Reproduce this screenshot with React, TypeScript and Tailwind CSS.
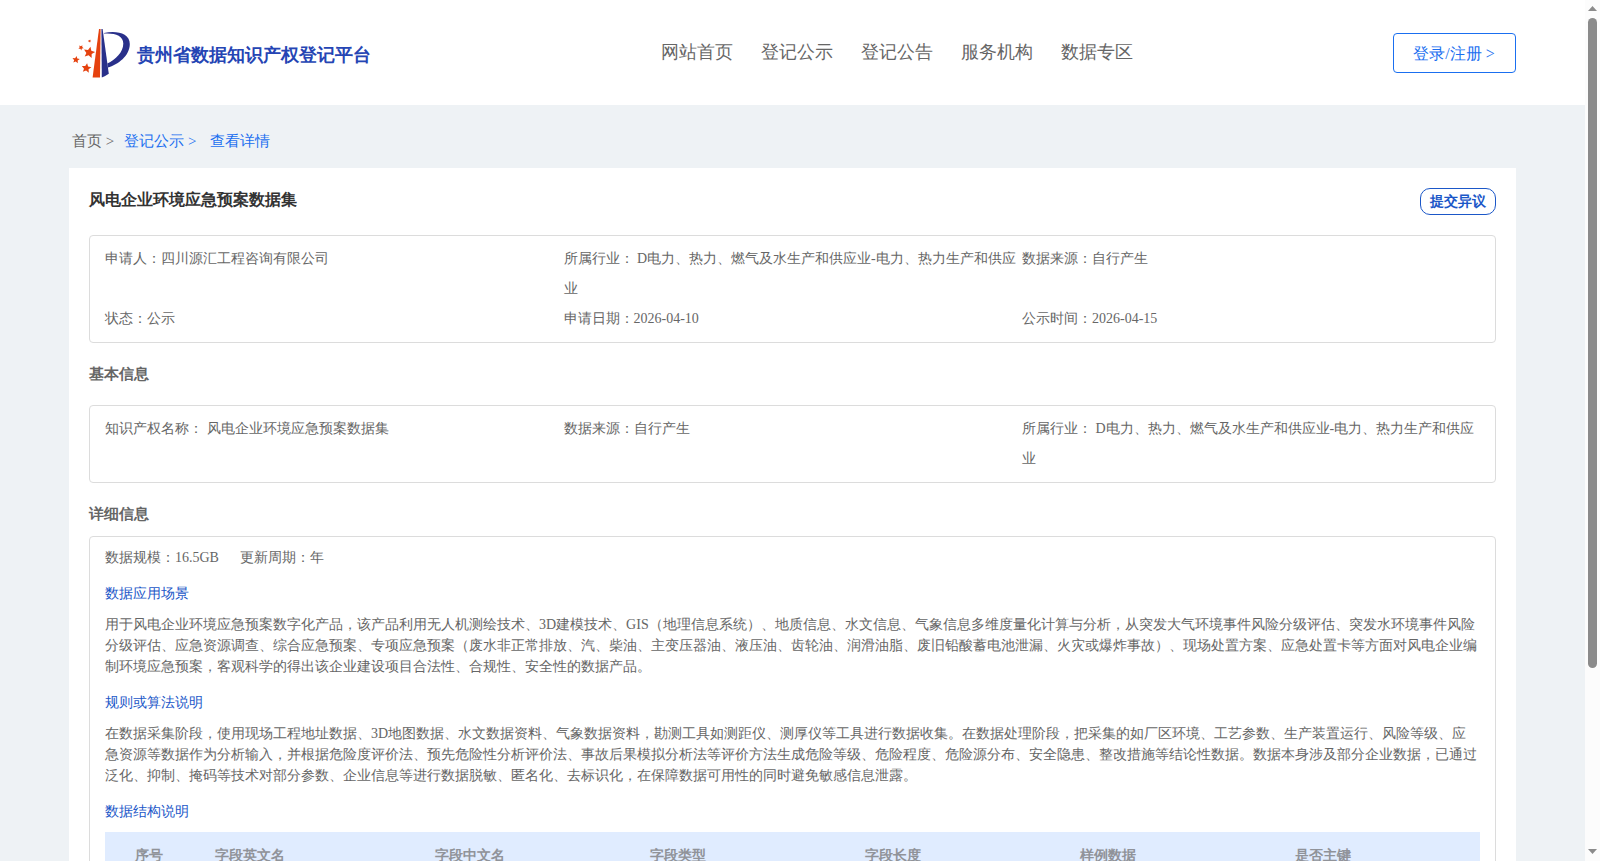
import clsx from "clsx";

const navItems = ["网站首页", "登记公示", "登记公告", "服务机构", "数据专区"];

const industry = "D电力、热力、燃气及水生产和供应业-电力、热力生产和供应业";

const columns = [
  { label: "序号", className: "w-[100px] pl-[30px]" },
  { label: "字段英文名", className: "w-[220px] pl-2.5" },
  { label: "字段中文名", className: "w-[215px] pl-2.5" },
  { label: "字段类型", className: "w-[215px] pl-2.5" },
  { label: "字段长度", className: "w-[215px] pl-2.5" },
  { label: "样例数据", className: "w-[215px] pl-2.5" },
  { label: "是否主键", className: "w-[195px] pl-2.5" },
];

function Star({ x, y, size, turn = 0 }: { x: number; y: number; size: number; turn?: number }) {
  return (
    <path
      transform={`translate(${x} ${y}) rotate(${turn}) scale(${size})`}
      d="M0 -1 L0.28 -0.38 L0.95 -0.31 L0.45 0.15 L0.59 0.81 L0 0.47 L-0.59 0.81 L-0.45 0.15 L-0.95 -0.31 L-0.28 -0.38 Z"
    />
  );
}

function Logo() {
  return (
    <svg width="60" height="52" viewBox="0 0 60 52" className="block">
      <path d="M27 1 L28.6 1 L28 49.4 L20.6 49.4 Z" fill="#e5420f" />
      <path d="M29.4 1 L30.6 1 L36.8 45.8 Q33.5 48.2 29.8 49.4 Z" fill="#29308a" />
      <path
        d="M32 5 C44 2.2 57.8 5 57.8 16 C57.8 28 46 36.5 35.9 39.6 L35.3 35.4 C43.5 32 51.3 24 51.3 15.5 C51.3 7.5 42.5 4.8 32 5.6 Z"
        fill="#29308a"
      />
      <g fill="#e5420f">
        <Star x={17.2} y={24.6} size={6} turn={12} />
        <Star x={14.4} y={40.2} size={5.1} turn={8} />
        <Star x={4} y={31.8} size={3.9} turn={8} />
        <Star x={9} y={19.6} size={2.8} turn={30} />
        <Star x={17.6} y={13} size={1.7} turn={20} />
      </g>
    </svg>
  );
}

function Header() {
  return (
    <header className="flex h-[105px] shrink-0 items-start bg-white pr-[69px] pl-[72px]">
      <div className="flex w-[588.5px] pt-7">
        <Logo />
        <h1 className="pt-3.5 pl-[5px] text-[18px] leading-[27px] font-bold text-[#2545b4]">
          贵州省数据知识产权登记平台
        </h1>
      </div>
      <nav className="flex gap-7 pt-[39px] text-[18px] leading-[27px] text-[#666]">
        {navItems.map((item) => (
          <a key={item}>{item}</a>
        ))}
      </nav>
      <button className="mt-[33px] ml-auto h-10 w-[123px] rounded-[4px] border border-[#1a6ff0] pt-0.5 pr-px text-[16px] text-[#1a6ff0]">
        登录/注册 &gt;
      </button>
    </header>
  );
}

function Breadcrumb() {
  return (
    <div className="flex h-[63px] pt-[25px] pl-[3px] text-[15px] leading-[22px] text-[#1a6ff0]">
      <span className="text-[#666]">首页 &gt;</span>
      <span className="ml-2.5">登记公示 &gt;</span>
      <span className="ml-[13.5px]">查看详情</span>
    </div>
  );
}

function InfoBox({ items, className }: { items: string[]; className?: string }) {
  return (
    <div
      className={clsx(
        "grid grid-cols-3 rounded-[4px] border border-[#dcdcdc] py-2 pr-[14.5px] pl-[15px] leading-[30px]",
        className
      )}
    >
      {items.map((item) => (
        <div key={item}>{item}</div>
      ))}
    </div>
  );
}

function DetailBlock({ title, children }: { title: string; children: string }) {
  return (
    <section className="mb-[15px]">
      <h3 className="mb-2.5 leading-[21px] text-[#1b57c8]">{title}</h3>
      <p className="leading-[21px]">{children}</p>
    </section>
  );
}

function Scrollbar() {
  return (
    <div className="flex h-full w-[15px] shrink-0 flex-col items-center bg-[#fcfcfc]">
      <svg width="15" height="18" viewBox="0 0 15 18">
        <path d="M3 11 L7.5 6 L12 11 Z" fill="#8b8b8b" />
      </svg>
      <div className="h-[650px] w-[9px] rounded-full bg-[#8b8b8b]" />
      <svg width="15" height="18" viewBox="0 0 15 18" className="mt-auto">
        <path d="M3 6 L7.5 11 L12 6 Z" fill="#8b8b8b" />
      </svg>
    </div>
  );
}

export default function App() {
  return (
    <div className="flex h-[861px] overflow-hidden font-['Liberation_Serif',serif] text-[14px] text-[#666]">
      <div className="flex h-full flex-1 flex-col overflow-hidden bg-[#eef2f5]">
        <Header />
        <main className="mx-[69px]">
          <Breadcrumb />
          <div className="bg-white px-5 pt-5">
            <div className="flex h-[47px] items-start justify-between">
              <h2 className="text-[16px] leading-6 font-bold text-[#333]">
                风电企业环境应急预案数据集
              </h2>
              <button className="h-[27px] w-[76px] rounded-[10px] border border-[#1b57c8] font-bold text-[#1b57c8]">
                提交异议
              </button>
            </div>
            <InfoBox
              items={[
                "申请人：四川源汇工程咨询有限公司",
                `所属行业： ${industry}`,
                "数据来源：自行产生",
                "状态：公示",
                "申请日期：2026-04-10",
                "公示时间：2026-04-15",
              ]}
            />
            <h2 className="mt-5 text-[15px] leading-[22px] font-bold">基本信息</h2>
            <InfoBox
              className="mt-5"
              items={[
                "知识产权名称： 风电企业环境应急预案数据集",
                "数据来源：自行产生",
                `所属行业： ${industry}`,
              ]}
            />
            <h2 className="mt-5 text-[15px] leading-[22px] font-bold">详细信息</h2>
            <div className="mt-[11px] rounded-[4px] border border-[#dcdcdc] px-[15px] pt-2.5">
              <div className="mb-[15px] flex gap-[21px] leading-[21px]">
                <span>数据规模：16.5GB</span>
                <span>更新周期：年</span>
              </div>
              <DetailBlock title="数据应用场景">
                用于风电企业环境应急预案数字化产品，该产品利用无人机测绘技术、3D建模技术、GIS（地理信息系统）、地质信息、水文信息、气象信息多维度量化计算与分析，从突发大气环境事件风险分级评估、突发水环境事件风险分级评估、应急资源调查、综合应急预案、专项应急预案（废水非正常排放、汽、柴油、主变压器油、液压油、齿轮油、润滑油脂、废旧铅酸蓄电池泄漏、火灾或爆炸事故）、现场处置方案、应急处置卡等方面对风电企业编制环境应急预案，客观科学的得出该企业建设项目合法性、合规性、安全性的数据产品。
              </DetailBlock>
              <DetailBlock title="规则或算法说明">
                在数据采集阶段，使用现场工程地址数据、3D地图数据、水文数据资料、气象数据资料，勘测工具如测距仪、测厚仪等工具进行数据收集。在数据处理阶段，把采集的如厂区环境、工艺参数、生产装置运行、风险等级、应急资源等数据作为分析输入，并根据危险度评价法、预先危险性分析评价法、事故后果模拟分析法等评价方法生成危险等级、危险程度、危险源分布、安全隐患、整改措施等结论性数据。数据本身涉及部分企业数据，已通过泛化、抑制、掩码等技术对部分参数、企业信息等进行数据脱敏、匿名化、去标识化，在保障数据可用性的同时避免敏感信息泄露。
              </DetailBlock>
              <h3 className="mb-2.5 leading-[21px] text-[#1b57c8]">数据结构说明</h3>
              <table className="w-full table-fixed bg-[#e0ecff] text-[#909399]">
                <thead>
                  <tr className="h-[47px]">
                    {columns.map((col) => (
                      <th key={col.label} className={clsx("text-left font-bold", col.className)}>
                        {col.label}
                      </th>
                    ))}
                  </tr>
                </thead>
              </table>
            </div>
          </div>
        </main>
      </div>
      <Scrollbar />
    </div>
  );
}
